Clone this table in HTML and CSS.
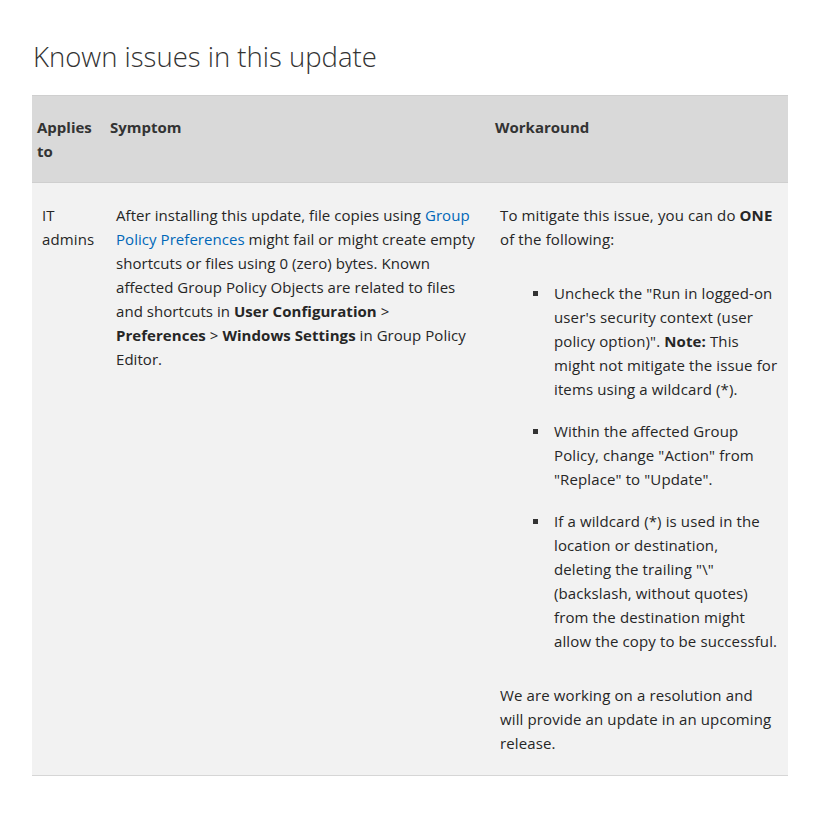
FILE: index.html
```html
<!DOCTYPE html>
<html>
<head>
<meta charset="utf-8">
<link rel="stylesheet" href="styles.css">
</head>
<body>
<main class="page">
  <h2 class="title">Known issues in this update</h2>
  <table class="issues">
    <colgroup>
      <col class="c1">
      <col class="c2">
      <col class="c3">
    </colgroup>
    <thead>
      <tr>
        <th>Applies to</th>
        <th>Symptom</th>
        <th>Workaround</th>
      </tr>
    </thead>
    <tbody>
      <tr>
        <td>IT admins</td>
        <td class="symptom">After installing this update, file copies using <a href="#">Group Policy Preferences</a> might fail or might create empty shortcuts or files using 0 (zero) bytes. Known affected Group Policy Objects are related to files and shortcuts in <b>User Configuration</b> &gt; <b>Preferences</b> &gt; <b>Windows Settings</b> in Group Policy Editor.</td>
        <td>
          <p>To mitigate this issue, you can do <b>ONE</b> of the following:</p>
          <ul>
            <li>Uncheck the "Run in logged-on user's security context (user policy option)". <b>Note:</b> This might not mitigate the issue for items using a wildcard (*).</li>
            <li>Within the affected Group Policy, change "Action" from "Replace" to "Update".</li>
            <li>If a wildcard (*) is used in the location or destination, deleting the trailing "\" (backslash, without quotes) from the destination might allow the copy to be successful.</li>
          </ul>
          <p>We are working on a resolution and will provide an update in an upcoming release.</p>
        </td>
      </tr>
    </tbody>
  </table>
</main>
</body>
</html>
```
FILE: styles.css
```css
html, body {
  margin: 0;
  padding: 0;
  background: #fff;
}
body {
  font-family: "Open Sans", "Noto Sans", sans-serif;
  color: #262626;
}
.page {
  padding: 38px 44px 0 32px;
}
.title {
  margin: 0 0 19px 1px;
  font-size: 27.5px;
  font-weight: 300;
  line-height: 38px;
  color: #333;
}
.issues {
  width: 756px;
  table-layout: fixed;
  border-collapse: collapse;
  font-size: 15px;
  line-height: 24px;
  letter-spacing: 0.12px;
}
.c1 { width: 73px; }
.c2 { width: 385px; }
.c3 { width: 298px; }
.issues th {
  background: #d9d9d9;
  border-top: 1px solid #cfcfcf;
  border-bottom: 1px solid #cfcfcf;
  text-align: left;
  vertical-align: top;
  padding: 19px 5px 19px 5px;
  font-weight: 700;
  color: #333;
  letter-spacing: 0;
}
.issues td {
  background: #f2f2f2;
  border-bottom: 1px solid #d6d6d6;
  vertical-align: top;
  padding: 20px 10px 20px 10px;
}
.issues td:first-child { padding-right: 4px; }
.issues td.symptom {
  padding-left: 11px;
  padding-right: 12px;
  letter-spacing: 0.05px;
}
.issues a {
  color: #0067b8;
  text-decoration: none;
}
.issues b { font-weight: 700; }
.issues p { margin: 0; }
.issues ul {
  margin: 30px 0;
  padding: 0 0 0 54px;
  list-style: none;
}
.issues li { position: relative; }
.issues li::before {
  content: "";
  position: absolute;
  left: -21px;
  top: 10px;
  width: 5px;
  height: 5px;
  background: #333;
}
.issues li + li { margin-top: 18px; }
```
